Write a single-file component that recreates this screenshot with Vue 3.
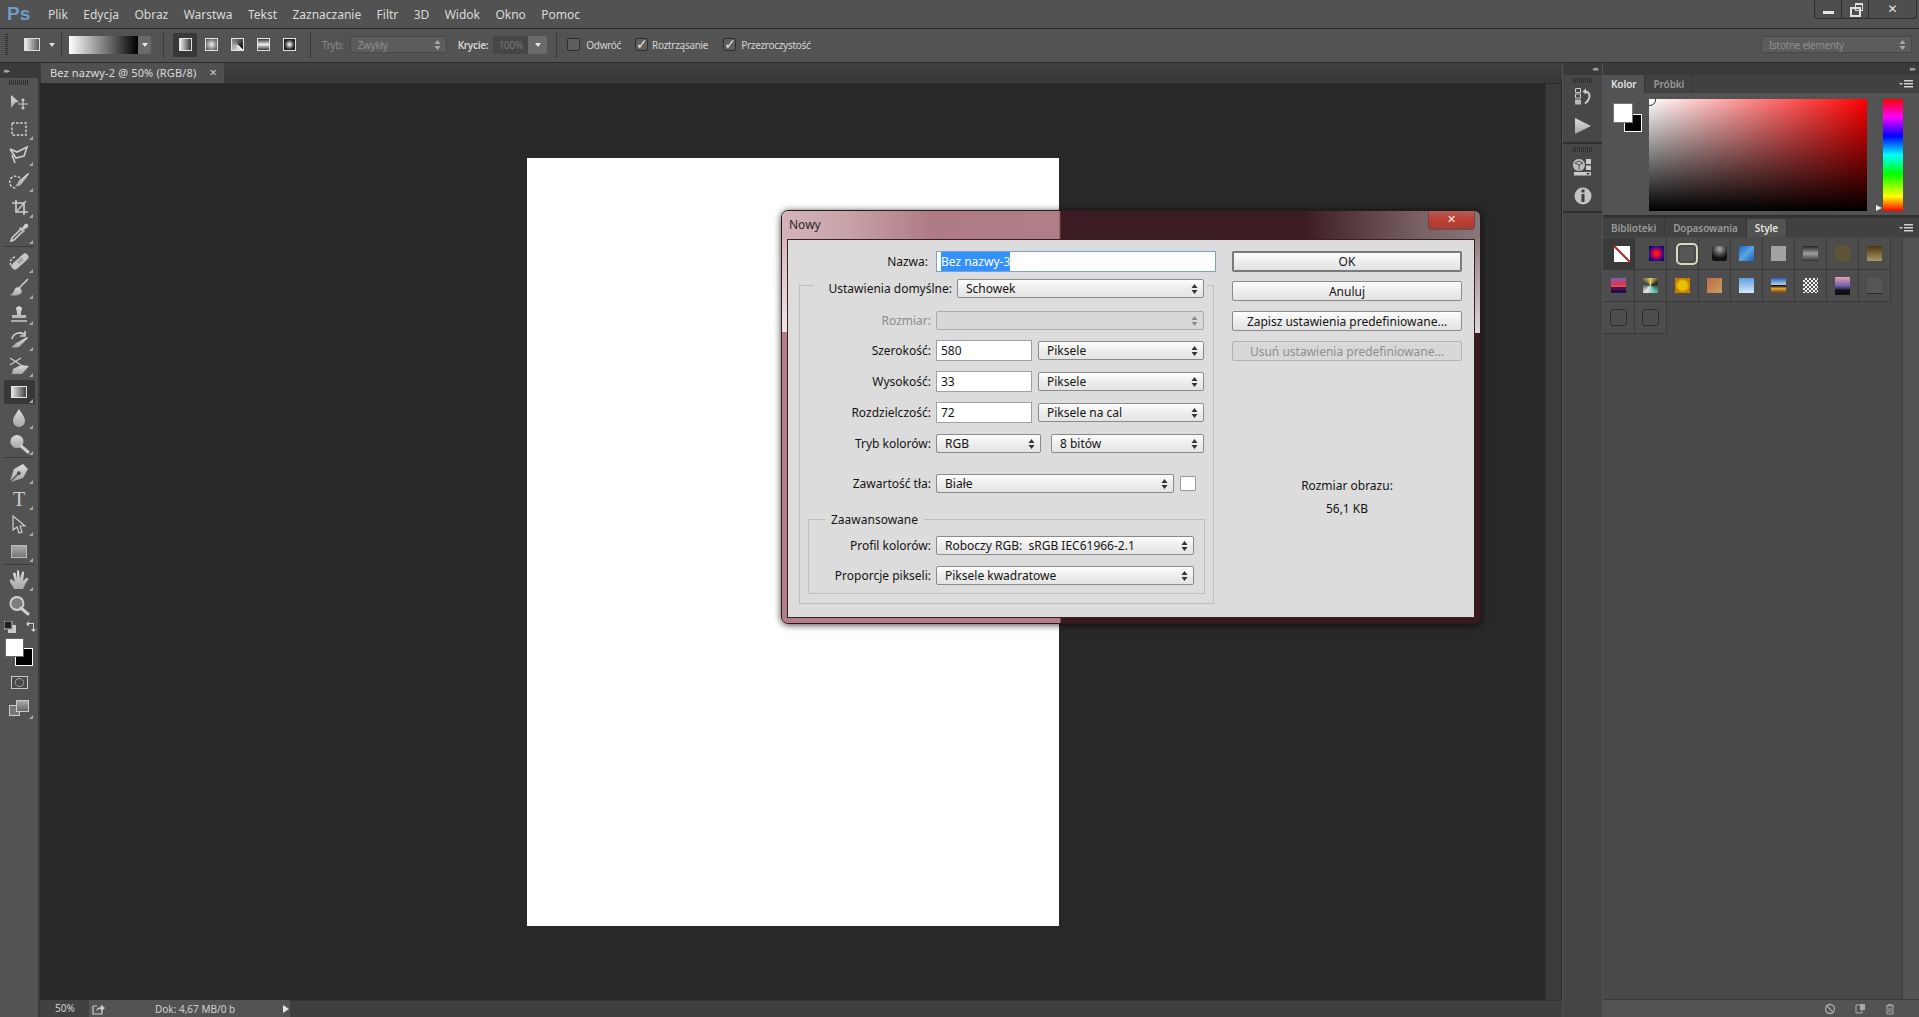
<script setup>
const menus = ['Plik', 'Edycja', 'Obraz', 'Warstwa', 'Tekst', 'Zaznaczanie', 'Filtr', '3D', 'Widok', 'Okno', 'Pomoc']

// c: f = filled, s = thin stroke, w = wide stroke, d = dashed
const toolGroups = [
  [
    { shapes: [{ c: 'f', d: 'M4 4 L12 11 L8.5 11.5 L4 17 Z' }, { c: 's', d: 'M16 8 V18 M11 13 H21 M14.5 9.5 L16 8 L17.5 9.5 M14.5 16.5 L16 18 L17.5 16.5' }] },
    { more: 1, shapes: [{ c: 'd', d: 'M5 6 H19 V18 H5 Z' }] },
    { more: 1, shapes: [{ c: 's2', d: 'M3 6 L10 9 L20 4 L17 13 L9 15 L3 6 M5 12 L8 20' }] },
    { more: 1, shapes: [{ c: 'd', d: 'M13 9 A6 6 0 1 0 10 19' }, { c: 'f', d: 'M21 4 L22 5 L16 13 C14 17 11 18 8 17 C11 15 11 11 14 10 Z' }] },
    { more: 1, shapes: [{ c: 's2', d: 'M9 5 V17 H21 M5 8 H17 V20' }, { c: 's', d: 'M9 17 L19 6' }] },
    { more: 1, shapes: [{ c: 'f', d: 'M15 7 L18 3 C20 2 22 4 21 6 L17 9 L18 11 L16 12 L12 8 L13 6 Z' }, { c: 's2', d: 'M13 9 L5 17 L4 20 L7 19 L15 11' }] }
  ],
  [
    { more: 1, shapes: [{ c: 'w', d: 'M8 16 L18 7' }, { c: 'x', d: 'M10.5 11 L13 13.5 M12 9.5 L14.5 12 M13.5 8 L16 10.5' }, { c: 'd', d: 'M8 7 A6 6 0 0 0 5 17' }] },
    { more: 1, shapes: [{ c: 's2', d: 'M21 3 L12 12' }, { c: 'f', d: 'M13 12 C10 10 8 12 7 15 C6 17 5 18 3 19 C8 20 14 20 15 15 Z' }] },
    { more: 1, shapes: [{ c: 'f', d: 'M9 6 A3.5 3.5 0 0 1 15 6 C15 8 14 9 14 10 V13 H19 V16 H5 V13 H10 V10 C10 9 9 8 9 6 Z M4 18 H20 V20 H4 Z' }] },
    { more: 1, shapes: [{ c: 's2', d: 'M5 11 C6 5 14 3 18 7 M18 3 L18 8 L13 8' }, { c: 'f', d: 'M20 9 L21 10 L14 17 C12 20 8 20 4 19 C7 18 8 15 11 14 Z' }] },
    { more: 1, shapes: [{ c: 's', d: 'M3 4 L14 11 M3 11 L14 4' }, { c: 'f', d: 'M6 15 L14 11 L22 12 L15 20 L5 20 Z' }] },
    { selected: 1, more: 1, gradient: 1, shapes: [] },
    { more: 1, shapes: [{ c: 'f', d: 'M12 3 C15 8 18 11 18 15 A6 6 0 0 1 6 15 C6 11 9 8 12 3 Z' }] },
    { more: 1, shapes: [{ c: 'f', d: 'M10 3 A6.5 6.5 0 1 1 9.9 3 Z' }, { c: 'w2', d: 'M14 14 L21 20' }] }
  ],
  [
    { more: 1, shapes: [{ c: 'f', d: 'M21 8 L16 3 L7 8 L3 20 L10 13 A2 2 0 1 1 11 14 L4 21 L16 17 Z' }] },
    { more: 1, letter: 'T', shapes: [] },
    { more: 1, shapes: [{ c: 's', d: 'M6 3 V17 L10 14 L12 20 L15 19 L13 13 H18 Z' }] },
    { more: 1, shape: 1, shapes: [] }
  ],
  [
    { more: 1, shapes: [{ c: 'f', d: 'M7 21 C6 18 2 14 3 12 C4 10 6 12 8 14 L6 6 C6 4 8 4 9 6 L10 11 L10 3 C10 2 12 2 12 3 L13 11 L15 4 C16 3 18 4 17 6 L16 13 L19 10 C21 9 22 11 21 12 C18 15 18 18 16 21 Z' }] },
    { shapes: [{ c: 'z', d: 'M10 3 A6.5 6.5 0 1 1 9.9 3 Z' }, { c: 'w2', d: 'M14 14 L21 20' }] }
  ]
]

const swatches = Array.from({ length: 20 }, (_, i) => i + 1)
</script>

<template>
  <div class="app">
    <svg class="defs" width="0" height="0">
      <symbol id="ud" viewBox="0 0 7 10"><path d="M3.5 0 L6.5 4 H.5 Z M.5 6 H6.5 L3.5 10 Z" /></symbol>
      <symbol id="panelmenu" viewBox="0 0 14 9"><path d="M0 3 H4 L2 5 Z M5 0 H14 V1.4 H5 Z M5 3 H14 V4.4 H5 Z M5 6 H14 V7.4 H5 Z" /></symbol>
      <linearGradient id="toolgrad" x1="0" x2="0" y1="0" y2="1">
        <stop offset="0" stop-color="#dcdcdc" />
        <stop offset="1" stop-color="#a6a6a6" />
      </linearGradient>
    </svg>

    <div class="menubar">
      <span class="logo">Ps</span>
      <span v-for="m in menus" :key="m" class="menu-item">{{ m }}</span>
      <div class="winbtns">
        <span class="winbtn min"><i></i></span>
        <span class="winbtn restore"><i></i><b></b></span>
        <span class="winbtn close">✕</span>
      </div>
    </div>

    <div class="options">
      <span class="grip-v"></span>
      <span class="preset"></span>
      <span class="caret"></span>
      <span class="vsep s1"></span>
      <span class="grad-pick"><span class="grad-bar"></span><span class="grad-btn"><span class="caret small"></span></span></span>
      <span class="vsep s2"></span>
      <span class="modes">
        <span class="mode on"><i class="m-linear"></i></span>
        <span class="mode"><i class="m-radial"></i></span>
        <span class="mode"><i class="m-angle"></i></span>
        <span class="mode"><i class="m-reflect"></i></span>
        <span class="mode"><i class="m-diamond"></i></span>
      </span>
      <span class="vsep s3"></span>
      <span class="opt-label dim tryb">Tryb:</span>
      <span class="opt-select mode-sel">Zwykły<svg class="ud dim-ud"><use href="#ud" /></svg></span>
      <span class="opt-label krycie">Krycie:</span>
      <span class="opacity"><span class="op-val">100%</span><span class="op-btn"><span class="caret small"></span></span></span>
      <span class="vsep s4"></span>
      <span class="check c1"></span><span class="opt-label">Odwróć</span>
      <span class="check c2 checked"></span><span class="opt-label">Roztrząsanie</span>
      <span class="check c3 checked"></span><span class="opt-label">Przezroczystość</span>
      <span class="opt-select workspace">Istotne elementy<svg class="ud dim-ud"><use href="#ud" /></svg></span>
    </div>

    <div class="work">
      <aside class="toolbar">
        <div class="strip"><span class="arrows">▸▸</span></div>
        <div class="grip-h"></div>
        <div class="tools">
          <template v-for="(group, gi) in toolGroups" :key="gi">
            <div v-if="gi" class="tool-sep"></div>
            <div v-for="(t, ti) in group" :key="ti" :class="['tool', { selected: t.selected, more: t.more }]">
              <span v-if="t.gradient" class="tool-gradient"></span>
              <span v-else-if="t.shape" class="tool-shape"></span>
              <span v-else-if="t.letter" class="tool-letter">{{ t.letter }}</span>
              <svg v-else width="24" height="24" viewBox="0 0 24 24">
                <path v-for="(s, si) in t.shapes" :key="si" :d="s.d" :class="s.c" />
              </svg>
            </div>
          </template>
        </div>
        <div class="mini-row">
          <svg width="12" height="12" viewBox="0 0 12 12"><path d="M0 0 H8 V8 H0 Z" fill="#1f1f1f" stroke="#ccc" /><path d="M4 8.5 H8.5 V4 H12 V12 H4 Z" fill="#ccc" /></svg>
          <svg width="12" height="12" viewBox="0 0 12 12"><path d="M1 3 L4 0 V2 H9 V8 H11 L8.5 11 L6 8 H8 V3 H4 V5.5 Z" fill="#cfcfcf" /></svg>
        </div>
        <div class="colors">
          <span class="col-bg"></span>
          <span class="col-fg"></span>
        </div>
        <div class="tool"><span class="quickmask"><i></i></span></div>
        <div class="tool more"><span class="screenmode"><i></i><b></b></span></div>
      </aside>

      <main class="doc">
        <div class="tabbar">
          <div class="tab">Bez nazwy-2 @ 50% (RGB/8)<span class="tab-x">×</span></div>
        </div>
        <div class="doc-mid">
          <div class="canvas-area"><div class="canvas"></div></div>
          <div class="vscroll"></div>
        </div>
        <div class="statusbar">
          <span class="zoom">50%</span>
          <span class="docinfo">
            <svg width="14" height="12" viewBox="0 0 14 12"><path d="M1 3 H5 M1 3 V11 H10 V7" fill="none" stroke="#ccc" stroke-width="1.2" /><path d="M4 8 C5 5 7 4 9 4 V1.5 L13 5 L9 8.5 V6 C7 6 6 6.5 4 8 Z" fill="#ccc" /></svg>
            <span class="dok">Dok: 4,67 MB/0 b</span>
            <span class="play"></span>
          </span>
          <span class="hscroll"></span>
        </div>
      </main>

      <div class="dock">
        <div class="strip dock-strip"><span class="arrows">◂◂</span></div>
        <div class="dock-group g1">
          <div class="grip-h"></div>
          <svg class="dock-ico hist-ico" width="20" height="20" viewBox="0 0 20 20">
            <path d="M2.5 1.5 H7.5 V5.5 H2.5 Z M2.5 7 H7.5 V11 H2.5 Z" fill="none" stroke="#ccc" />
            <path d="M2 12.5 H8 V17.5 H2 Z" fill="#bbb" />
            <path d="M12 4.5 C16.5 4.5 17.5 9 15.5 12.5 C14.8 14 13.5 15.5 12 16.5" fill="none" stroke="#ccc" stroke-width="2" />
            <path d="M9.5 4.5 L13 1.5 V7.5 Z" fill="#ccc" />
          </svg>
          <svg class="dock-ico play-ico" width="20" height="20" viewBox="0 0 20 20"><path d="M2 2 L18 10 L2 18 Z" fill="url(#toolgrad)" /></svg>
        </div>
        <div class="dock-group g2">
          <div class="grip-h"></div>
          <svg class="dock-ico" width="20" height="20" viewBox="0 0 20 20">
            <path d="M6 2 A6 6 0 1 1 5.9 2 Z" fill="#bbb" />
            <path d="M6 4 L2 6 L6 8 L10 6 Z M6 8 V13" fill="none" stroke="#555" />
            <path d="M13 2 H18 V7 H13 Z M13 8.5 H18 V13 H13 Z" fill="#ccc" />
            <path d="M1 15 H18 V18.5 H1 Z" fill="#ccc" />
            <path d="M13 16 H17 L15 18 Z" fill="#333" />
          </svg>
          <svg class="dock-ico" width="20" height="20" viewBox="0 0 20 20">
            <circle cx="10" cy="10" r="8.5" fill="#c4c4c4" />
            <path d="M8.5 3.5 H11.5 V6.5 H8.5 Z M8.5 8 H11.5 V16 H8.5 Z" fill="#3f3f3f" />
          </svg>
        </div>
      </div>

      <aside class="panels">
        <div class="strip panels-strip"><span class="arrows">▸▸</span></div>
        <section class="panel color-panel">
          <div class="tabs">
            <span class="ptab on">Kolor</span>
            <span class="ptab">Próbki</span>
            <svg class="pmenu"><use href="#panelmenu" /></svg>
          </div>
          <div class="color-body">
            <div class="cp-swatches">
              <span class="cp-bg"></span>
              <span class="cp-fg"></span>
            </div>
            <div class="spectrum"><span class="picker"></span></div>
            <span class="slider-mark"></span>
            <div class="hue"></div>
          </div>
        </section>
        <section class="panel style-panel">
          <div class="tabs">
            <span class="ptab">Biblioteki</span>
            <span class="ptab">Dopasowania</span>
            <span class="ptab on">Style</span>
            <svg class="pmenu"><use href="#panelmenu" /></svg>
          </div>
          <div class="style-body">
            <div class="style-grid">
              <div v-for="n in swatches" :key="n" :class="['cell', { first: n === 1 }]">
                <span :class="['sw', 's' + n]"></span>
              </div>
            </div>
            <div class="style-scroll"></div>
          </div>
          <div class="panel-foot">
            <svg width="12" height="12" viewBox="0 0 12 12"><circle cx="6" cy="6" r="4.5" fill="none" stroke="#aaa" stroke-width="1.3" /><path d="M3 3 L9 9" stroke="#aaa" stroke-width="1.3" /></svg>
            <svg width="12" height="12" viewBox="0 0 12 12"><path d="M2 2 H8 V10 H2 Z" fill="none" stroke="#aaa" /><path d="M6 1 H11 V7 H6 Z" fill="#aaa" /></svg>
            <svg width="12" height="12" viewBox="0 0 12 12"><path d="M2 3 H10 M4 3 V1.5 H8 V3 M3 3 V11 H9 V3 M5 5 V9.5 M7 5 V9.5" fill="none" stroke="#aaa" /></svg>
          </div>
        </section>
      </aside>
    </div>

    <div class="dialog">
      <div class="titlebar">
        <span class="title">Nowy</span>
        <span class="dlg-close">✕</span>
      </div>
      <div class="client">
        <div class="left">
          <div class="row name-row">
            <label class="lab">Nazwa:</label>
            <span class="input name"><span class="sel-text">Bez nazwy-3</span></span>
          </div>
          <div class="group">
            <div class="preset-row">
              <label class="lab">Ustawienia domyślne:</label>
              <span class="sel w248"><span>Schowek</span><svg class="ud"><use href="#ud" /></svg></span>
            </div>
            <div class="row size-row disabled">
              <label class="lab">Rozmiar:</label>
              <span class="sel w269 off"><span></span><svg class="ud"><use href="#ud" /></svg></span>
            </div>
            <div class="row gap10 tall">
              <label class="lab">Szerokość:</label>
              <span class="input num">580</span>
              <span class="sel unit"><span>Piksele</span><svg class="ud"><use href="#ud" /></svg></span>
            </div>
            <div class="row gap10 tall">
              <label class="lab">Wysokość:</label>
              <span class="input num">33</span>
              <span class="sel unit"><span>Piksele</span><svg class="ud"><use href="#ud" /></svg></span>
            </div>
            <div class="row gap10 tall">
              <label class="lab">Rozdzielczość:</label>
              <span class="input num">72</span>
              <span class="sel unit"><span>Piksele na cal</span><svg class="ud"><use href="#ud" /></svg></span>
            </div>
            <div class="row mode-row">
              <label class="lab">Tryb kolorów:</label>
              <span class="sel w105"><span>RGB</span><svg class="ud"><use href="#ud" /></svg></span>
              <span class="sel w154"><span>8 bitów</span><svg class="ud"><use href="#ud" /></svg></span>
            </div>
            <div class="row bg-row">
              <label class="lab">Zawartość tła:</label>
              <span class="sel w238"><span>Białe</span><svg class="ud"><use href="#ud" /></svg></span>
              <span class="bg-swatch"></span>
            </div>
            <div class="advanced">
              <span class="legend">Zaawansowane</span>
              <div class="row">
                <label class="lab lab-adv">Profil kolorów:</label>
                <span class="sel w258"><span>Roboczy RGB:&nbsp; sRGB IEC61966-2.1</span><svg class="ud"><use href="#ud" /></svg></span>
              </div>
              <div class="row adv2">
                <label class="lab lab-adv">Proporcje pikseli:</label>
                <span class="sel w258"><span>Piksele kwadratowe</span><svg class="ud"><use href="#ud" /></svg></span>
              </div>
            </div>
          </div>
        </div>
        <div class="right">
          <button class="btn ok">OK</button>
          <button class="btn b2">Anuluj</button>
          <button class="btn b3">Zapisz ustawienia predefiniowane...</button>
          <button class="btn b3 off">Usuń ustawienia predefiniowane...</button>
          <div class="img-size">Rozmiar obrazu:</div>
          <div class="img-kb">56,1 KB</div>
        </div>
      </div>
    </div>
  </div>
</template>

<style scoped>
.app { position: relative; width: 1919px; height: 1017px; overflow: hidden; display: flex; flex-direction: column; background: #535353; font-family: "Noto Sans", "Open Sans", sans-serif; color: #d6d6d6; font-size: 12px; }
.defs { position: absolute; }
i { display: block; }

/* menu */
.menubar { height: 28px; flex: none; display: flex; align-items: center; background: #525252; border-bottom: 1px solid #2b2b2b; }
.logo { width: 48px; padding-left: 7px; box-sizing: border-box; color: #6f9ccb; font: bold 19px "Liberation Sans", sans-serif; }
.menu-item { margin-right: 15.4px; color: #dadada; font-size: 12px; }
.winbtns { margin-left: auto; margin-right: 2px; align-self: flex-start; height: 18px; display: flex; border: 1px solid #2c2c2c; border-top: 0; border-radius: 0 0 4px 4px; background: #4e4e4e; }
.winbtn { display: flex; align-items: center; justify-content: center; border-right: 1px solid #2c2c2c; width: 26px; position: relative; }
.winbtn.close { width: 47px; border-right: 0; color: #e4e4e4; font: bold 12px "DejaVu Sans", sans-serif; }
.min i { width: 11px; height: 3px; background: #e6e6e6; margin-top: 6px; }
.restore i { width: 7px; height: 6px; border: 2px solid #e0e0e0; position: absolute; left: 8px; top: 7px; background: #4e4e4e; }
.restore b { width: 6px; height: 5px; border: 1px solid #e0e0e0; border-top-width: 2px; position: absolute; left: 13px; top: 3px; }

/* options bar */
.options { height: 33px; box-sizing: content-box; flex: none; display: flex; align-items: center; background: #535353; border-bottom: 1px solid #2b2b2b; font-size: 10px; letter-spacing: -.3px; }
.options > * { position: relative; top: -1px; }
.grip-v { width: 3px; height: 22px; margin-left: 5px; background: repeating-linear-gradient(#2f2f2f 0 1px, transparent 1px 2px); }
.preset { width: 14px; height: 11px; margin-left: 16px; border: 1px solid #ddd; background: linear-gradient(90deg, #f0f0f0, #555); }
.caret { width: 0; height: 0; border: 3px solid transparent; border-top: 4px solid #dedede; border-bottom: 0; margin-left: 9px; }
.caret.small { margin: 0; border-top-color: #e8e8e8; }
.vsep { width: 1px; height: 26px; background: #3c3c3c; }
.s1 { margin-left: 6px; }
.grad-pick { display: flex; width: 82px; height: 18px; margin-left: 7px; }
.grad-bar { flex: 1; background: linear-gradient(90deg, #fff, #000); }
.grad-btn { width: 13px; background: #6a6a6a; display: flex; align-items: center; justify-content: center; border-radius: 0 2px 2px 0; }
.s2 { margin-left: 12px; }
.modes { display: flex; margin-left: 9px; }
.mode { width: 26px; height: 24px; display: flex; align-items: center; justify-content: center; }
.mode.on { width: 24px; margin-right: 1px; background: #383838; border-radius: 2px; }
.mode i { width: 11px; height: 11px; border: 1px solid #e2e2e2; }
.m-linear { background: linear-gradient(90deg, #eee, #333); }
.m-radial { background: radial-gradient(#eee, #444); }
.m-angle { background: conic-gradient(from 135deg, #eee, #111); }
.m-reflect { background: linear-gradient(#333, #eee 50%, #333); }
.m-diamond { background: radial-gradient(#fff, #222 65%); }
.s3 { margin-left: 8px; }
.opt-label { color: #d4d4d4; white-space: nowrap; }
.opt-label.dim { color: #8c8c8c; }
.tryb { margin-left: 11px; }
.opt-select { height: 17px; box-sizing: border-box; display: flex; align-items: center; background: #5c5c5c; border: 1px solid #474747; border-radius: 2px; color: #8e8e8e; padding-left: 7px; }
.mode-sel { width: 97px; margin-left: 6px; }
.krycie { margin-left: 11px; font-weight: 600; }
.opacity { display: flex; height: 18px; margin-left: 5px; }
.op-val { width: 35px; background: #464646; color: #787878; font-size: 10px; line-height: 18px; text-align: center; }
.op-btn { width: 19px; background: #6a6a6a; display: flex; align-items: center; justify-content: center; border-radius: 0 2px 2px 0; }
.s4 { margin-left: 9px; }
.check { width: 11px; height: 11px; margin-right: 5px; border: 1px solid #2e2e2e; border-radius: 2px; background: #5e5e5e; }
.c1 { margin-left: 10px; margin-right: 6px; }
.c2 { margin-left: 14px; margin-right: 4px; }
.c3 { margin-left: 15px; }
.checked::after { content: "✓"; position: absolute; left: 0; top: -3px; color: #e4e4e4; font: bold 14px "DejaVu Sans", sans-serif; }
.workspace { margin-left: auto; margin-right: 7px; width: 151px; }
.ud { position: absolute; right: 5px; top: 50%; width: 7px; height: 10px; margin-top: -5px; fill: #333; }
.dim-ud { fill: #a8a8a8; }

/* work area */
.work { flex: 1; min-height: 0; display: flex; }
.strip { height: 15px; background: #3a3a3a; display: flex; align-items: center; font-size: 7px; color: #aaa; }
.arrows { letter-spacing: -1px; font-family: "DejaVu Sans", sans-serif; }
.grip-h { height: 5px; margin: 2px auto 0; width: 20px; background: repeating-linear-gradient(90deg, #2e2e2e 0 1px, transparent 1px 2px); }

.toolbar { width: 38px; flex: none; background: #535353; border-right: 2px solid #3a3a3a; display: flex; flex-direction: column; }
.toolbar .strip { padding-left: 4px; }
.tools { margin-top: 5px; }
.tool { height: 26px; width: 38px; display: flex; align-items: center; justify-content: center; position: relative; }
.tool.more::after { content: ""; position: absolute; right: 5px; bottom: 2px; border-left: 4px solid transparent; border-bottom: 4px solid #aaa; }
.tool.selected::before { content: ""; position: absolute; left: 4px; right: 3px; top: 1px; bottom: 1px; background: #383838; border-radius: 2px; }
.tool-sep { height: 1px; margin: 0 4px 2px; background: #3a3a3a; }
.tool-gradient { position: relative; width: 14px; height: 10px; border: 1px solid #e8e8e8; background: linear-gradient(90deg, #e4e4e4, #444); }
.tool-shape { width: 14px; height: 11px; border: 1px solid #bbb; background: linear-gradient(#aaa, #777); }
.tool-letter { font: 20px "Liberation Serif", serif; color: #cfcfcf; }
.f { fill: url(#toolgrad); }
.s { fill: none; stroke: #cfcfcf; stroke-width: 1.2; }
.s2 { fill: none; stroke: #cfcfcf; stroke-width: 1.6; }
.d { fill: none; stroke: #d8d8d8; stroke-width: 1.4; stroke-dasharray: 2.5 1.6; }
.w { fill: none; stroke: #c6c6c6; stroke-width: 7; stroke-linecap: round; }
.w2 { fill: none; stroke: #cfcfcf; stroke-width: 3; stroke-linecap: round; }
.x { fill: none; stroke: #666; stroke-width: 1; }
.z { fill: #7e7e7e; stroke: #cfcfcf; stroke-width: 1.8; }
.mini-row { height: 15px; display: flex; align-items: center; gap: 9px; padding-left: 4px; }
.colors { display: grid; height: 33px; margin-top: 2px; }
.col-fg, .col-bg { grid-area: 1 / 1; border: 1px solid #fff; box-sizing: border-box; }
.col-bg { width: 18px; height: 18px; margin: 12px 0 0 15px; background: #000; }
.col-fg { width: 19px; height: 19px; margin: 2px 0 0 5px; background: #fff; border-color: #666; }
.quickmask { width: 15px; height: 11px; border: 1px solid #c8c8c8; background: #4a4a4a; display: flex; align-items: center; justify-content: center; }
.quickmask i { width: 7px; height: 7px; border: 1px dotted #eee; border-radius: 50%; }
.screenmode { width: 20px; height: 16px; position: relative; }
.screenmode i { position: absolute; left: 0; bottom: 0; width: 9px; height: 9px; border: 1px solid #ccc; background: #777; }
.screenmode b { position: absolute; right: 0; top: 0; width: 11px; height: 10px; border: 1px solid #ccc; background: linear-gradient(#aaa, #666); }

.doc { flex: 1; min-width: 0; display: flex; flex-direction: column; }
.tabbar { height: 20px; flex: none; display: flex; background: linear-gradient(#404040, #373737); border-bottom: 1px solid #2b2b2b; }
.tab { width: 183px; box-sizing: border-box; margin-left: 1px; padding-left: 9px; background: #505050; color: #dcdcdc; font-size: 11px; letter-spacing: .15px; line-height: 20px; white-space: nowrap; position: relative; }
.tab-x { position: absolute; right: 7px; top: -1px; color: #cfcfcf; font-size: 13px; }
.doc-mid { flex: 1; min-height: 0; display: flex; }
.canvas-area { flex: 1; background: #282828; display: flex; align-items: center; justify-content: center; }
.canvas { width: 532px; height: 768px; background: #fff; }
.vscroll { width: 15px; background: #3b3b3b; border-left: 1px solid #333; border-right: 1px solid #2a2a2a; }
.statusbar { height: 17px; flex: none; display: flex; background: #3f3f3f; font-size: 10px; }
.zoom { width: 49px; background: #414141; padding-left: 15px; box-sizing: border-box; line-height: 17px; color: #d0d0d0; }
.docinfo { width: 201px; background: #535353; display: flex; align-items: center; padding-left: 3px; box-sizing: border-box; }
.dok { margin-left: 49px; color: #d0d0d0; white-space: nowrap; }
.play { margin-left: auto; margin-right: 1px; border-left: 6px solid #e4e4e4; border-top: 4px solid transparent; border-bottom: 4px solid transparent; }
.hscroll { flex: 1; border-top: 1px solid #333; }

.dock { width: 39px; flex: none; margin-left: 1px; background: #454545; display: flex; flex-direction: column; }
.dock-strip { height: 12px; justify-content: flex-end; padding-right: 5px; }
.dock-group { background: #474747; border-bottom: 2px solid #2f2f2f; display: flex; flex-direction: column; align-items: center; }
.dock-group .grip-h { margin-top: 3px; }
.g1 { height: 67px; }
.g2 { height: 67px; }
.dock-ico { margin-top: 5px; }
.hist-ico { margin-top: 4px; }
.play-ico { margin-top: 9px; }
.g2 .dock-ico + .dock-ico { margin-top: 9px; }

.panels { width: 316px; flex: none; margin-left: 1px; display: flex; flex-direction: column; background: #3a3a3a; }
.panels-strip { height: 12px; justify-content: flex-end; padding-right: 4px; }
.panel { display: flex; flex-direction: column; }
.tabs { height: 18px; flex: none; display: flex; background: #414141; position: relative; font-size: 10px; letter-spacing: -.1px; }
.ptab { padding: 0 8px; line-height: 18px; font-weight: 600; color: #999; border-right: 1px solid #383838; white-space: nowrap; }
.ptab.on { background: #535353; color: #e2e2e2; }
.pmenu { position: absolute; right: 6px; top: 5px; width: 14px; height: 9px; fill: #d0d0d0; }
.color-panel { height: 142px; flex: none; }
.color-body { flex: 1; display: flex; background: #535353; padding: 6px 16px 0 10px; position: relative; border-bottom: 2px solid #2f2f2f; }
.cp-swatches { width: 36px; display: grid; padding-top: 4px; align-content: start; }
.cp-fg, .cp-bg { grid-area: 1 / 1; box-sizing: border-box; }
.cp-bg { width: 18px; height: 18px; margin: 11px 0 0 11px; background: #000; border: 1px solid #fff; }
.cp-fg { width: 20px; height: 20px; background: #fff; border: 1px solid #777; }
.spectrum { width: 218px; height: 112px; position: relative; overflow: hidden; background: linear-gradient(to top, #000, transparent), linear-gradient(to right, #fff, #f00); }
.picker { position: absolute; left: -5px; top: -5px; width: 10px; height: 10px; border: 1px solid #333; border-radius: 50%; }
.slider-mark { margin: 106px 0 0 9px; width: 0; height: 0; border-left: 6px solid #e8e8e8; border-top: 3px solid transparent; border-bottom: 3px solid transparent; }
.hue { width: 20px; height: 112px; margin-left: 1px; background: linear-gradient(#f00 0, #f0f 16%, #00f 33%, #0ff 50%, #0f0 67%, #ff0 87%, #f00 100%); }
.style-panel { flex: 1; min-height: 0; margin-top: 2px; }
.style-body { flex: 1; min-height: 0; display: flex; background: #494949; padding-top: 1px; }
.style-grid { width: 288px; display: flex; flex-wrap: wrap; align-content: flex-start; background: #494949; }
.cell { width: 32px; height: 32px; box-sizing: border-box; border-right: 1px solid #3a3a3a; border-bottom: 1px solid #3a3a3a; display: flex; align-items: center; justify-content: center; background: #4d4d4d; }
.cell.first { background: #3a3a3a; }
.style-scroll { flex: 1; margin-left: 11px; background: #535353; border-left: 1px solid #3f3f3f; }
.sw { width: 15px; height: 15px; display: block; }
.sw.s1 { position: relative; background: #fff; width: 16px; height: 16px; }
.sw.s1::after { content: ""; position: absolute; left: -4px; top: 7px; width: 24px; height: 2px; background: #a02828; transform: rotate(45deg); }
.sw.s2 { background: radial-gradient(#ff3000, #d0004a 35%, #20108a 70%, #08062a); }
.sw.s3 { width: 14px; height: 14px; background: #565656; border: 1px solid #4a4a4a; outline: 2px solid #d8d8c0; outline-offset: 1px; border-radius: 2px; }
.sw.s4 { background: radial-gradient(circle at 50% 20%, #aaa, #111 65%); border-radius: 2px; }
.sw.s5 { background: linear-gradient(135deg, #1c64b8, #5aa6e6 50%, #1a5fb0); }
.sw.s6 { background: #a2a2a2; }
.sw.s7 { background: linear-gradient(#222, #a0a0a0 50%, #333); }
.sw.s8 { background: #5f5438; }
.sw.s9 { background: linear-gradient(#4a3610, #a89868); }
.sw.s10 { background: linear-gradient(#8d5aa0 0 20%, #d03a60 20% 45%, #e84a50 45% 60%, #50104a 60% 80%, #1a1050 80%); }
.sw.s11 { background: conic-gradient(#e8d060, #202020, #60c0b0, #e8e8e8, #304040, #e8d060); }
.sw.s12 { background: radial-gradient(#e8c000 40%, #c07000 75%, #e89020); }
.sw.s13 { background: linear-gradient(135deg, #c06a4a, #c8a060); }
.sw.s14 { background: linear-gradient(#5aa0e0, #d8e8f8); }
.sw.s15 { background: linear-gradient(#2a5fb0, #b0d0f0 45%, #111 50%, #e0a030 70%, #704010); }
.sw.s16 { background: repeating-conic-gradient(#eee 0 25%, #555 0 50%) 0 0 / 4px 4px; }
.sw.s17 { background: linear-gradient(#e8a0b0, #6a60b0 50%, #101010 75%); height: 18px; }
.sw.s18 { background: #565656; border-bottom: 1px solid #2a2a2a; }
.sw.s19, .sw.s20 { background: transparent; border: 1px solid #2e2e2e; border-radius: 3px; }
.panel-foot { height: 17px; flex: none; display: flex; align-items: center; justify-content: flex-end; gap: 18px; padding-right: 23px; background: #535353; border-top: 1px solid #3a3a3a; }

/* "Nowy" dialog, floats over the workspace */
.dialog { position: absolute; left: 781px; top: 210px; width: 700px; height: 414px; box-sizing: border-box; border: 1px solid #2a1a1d; border-radius: 7px; box-shadow: 0 1px 7px rgba(0, 0, 0, .75); padding: 0 5px 5px; display: flex; flex-direction: column; color: #141414; font-size: 12px;
  background:
    linear-gradient(#cfa9af, #efe5e6) left top / 7px 121px no-repeat,
    linear-gradient(#7b6468, #dcd8d8) right top / 7px 122px no-repeat,
    linear-gradient(90deg, #b27f88 278px, #381a20 279px); }
.titlebar { height: 26px; padding: 0 0 2px 7px; margin: 0 -5px; flex: none; position: relative; display: flex; align-items: center; border-radius: 6px 6px 0 0; background: linear-gradient(90deg, #d4b4b8 0, #c9a5aa 60px, #ae7b84 150px, #b07e87 277px, #3b1c22 279px, #3b1c22 520px, #7a6266 640px, #85767a 698px); }
.title { color: #2a2a2a; font-size: 12px; }
.dlg-close { position: absolute; right: 5px; top: 0; width: 47px; height: 19px; box-sizing: border-box; border: 1px solid #6a4a4a; border-top: 0; border-radius: 0 0 4px 4px; background: linear-gradient(#b06058, #c03c30 50%, #a04038); color: #f0f0f0; font: bold 11px/17px "DejaVu Sans", sans-serif; text-align: center; }
.client { flex: 1; min-height: 0; display: flex; background: #dcdcdc; border: 1px solid #3a1f25; }
.left { width: 433px; flex: none; box-sizing: border-box; padding: 11px 0 0 11px; }
.row { display: flex; align-items: center; }
.lab { width: 131px; flex: none; margin-right: 5px; text-align: right; white-space: nowrap; }
.name-row { margin-left: 1px; }
.name-row .lab { padding-right: 3px; box-sizing: border-box; }
.input { height: 21px; box-sizing: border-box; background: #fff; border: 1px solid #a0a0a0; padding-left: 4px; line-height: 19px; }
.input.name { width: 280px; border-color: #7da2ce; }
.sel-text { background: #3390ff; color: #fff; padding: 1px 0; }
.input.num { width: 96px; margin-right: 6px; }
.group { margin-top: 13px; width: 415px; height: 319px; box-sizing: border-box; border: 1px solid #bebebe; }
.preset-row { display: flex; align-items: center; margin: -7px 0 0 14px; width: 393px; background: #dcdcdc; }
.preset-row .lab { width: 138px; }
.sel { height: 19px; box-sizing: border-box; position: relative; display: block; background: linear-gradient(#fdfdfd, #ececec 55%, #e4e4e4); border: 1px solid #8a8a8a; border-radius: 2px; padding-left: 8px; line-height: 17px; white-space: nowrap; }
.sel.off { background: #d8d8d8; border-color: #ababab; }
.sel.off .ud { fill: #8a8a8a; }
.w248 { width: 247px; }
.w269 { width: 268px; }
.w105 { width: 105px; margin-right: 10px; }
.w154 { width: 153px; }
.w238 { width: 238px; }
.w258 { width: 258px; }
.unit { width: 166px; }
.size-row { margin-top: 13px; }
.disabled .lab { color: #8c8c8c; }
.gap10 { margin-top: 10px; }
.tall { height: 21px; }
.mode-row { margin-top: 11px; }
.bg-row { margin-top: 21px; }
.bg-swatch { width: 16px; height: 15px; box-sizing: border-box; margin-left: 6px; background: #fff; border: 1px solid #9a9a9a; border-radius: 1px; }
.advanced { position: relative; margin: 26px 0 0 8px; width: 397px; height: 75px; box-sizing: border-box; border: 1px solid #bebebe; padding-top: 16px; }
.legend { position: absolute; left: 16px; top: -9px; background: #dcdcdc; padding: 0 6px; }
.lab-adv { width: 122px; }
.adv2 { margin-top: 11px; }
.right { flex: 1; padding: 11px 0 0 11px; }
.btn { display: block; width: 230px; height: 20px; box-sizing: border-box; padding: 0; margin-top: 10px; background: linear-gradient(#fdfdfd, #eeeeee 50%, #e2e2e2); border: 1px solid #8a8a8a; border-radius: 2px; color: #141414; font: inherit; text-align: center; white-space: nowrap; }
.btn.ok { height: 21px; margin-top: 0; border: 2px solid #7a7a7a; }
.btn.b2 { margin-top: 9px; }
.btn.off { background: #d8d8d8; border-color: #b4b4b4; color: #8e8e8e; }
.img-size, .img-kb { width: 230px; text-align: center; line-height: 16px; }
.img-size { margin-top: 117px; }
.img-kb { margin-top: 7px; }
</style>

<style>
html, body { margin: 0; background: #282828; }
</style>
